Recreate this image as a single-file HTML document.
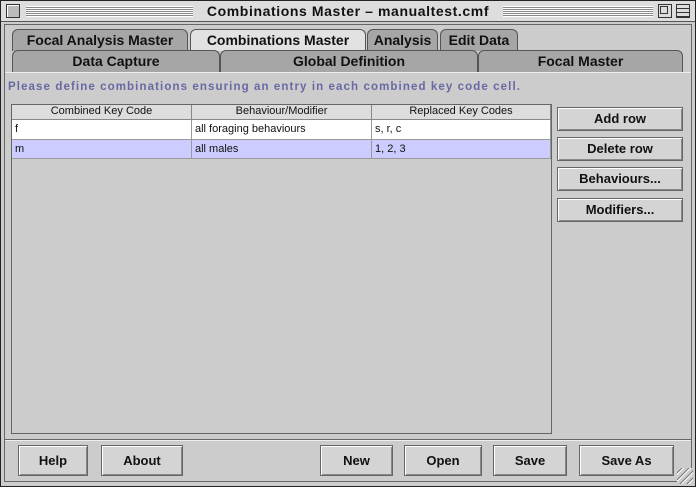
<!DOCTYPE html><html><head><style>
*{box-sizing:border-box;margin:0;padding:0}
body{width:696px;height:487px;background:#ccc;font-family:"Liberation Sans",sans-serif;position:relative;overflow:hidden}
.a{position:absolute}
.win{left:0;top:0;width:696px;height:487px;border:1px solid #222;background:#ccc}
.title{left:1px;top:1px;width:694px;height:21px;background:#ddd;border-bottom:1px solid #555}
.stripes{height:11px;top:6px;background:repeating-linear-gradient(#fff 0 1px,#888 1px 2px)}
.tt{left:0;top:3px;width:696px;text-align:center;font-weight:bold;font-size:14px;color:#111;letter-spacing:0.6px}
.tab{font-weight:bold;font-size:14px;text-align:center;color:#111;border:1px solid #555;border-bottom:none;border-radius:6px 6px 0 0}
.btn{background:#d4d4d4;border:1px solid #666;box-shadow:inset 1px 1px 0 #fff,inset -1px -1px 0 #888;font-weight:bold;font-size:13px;text-align:center;color:#111}
.cell{font-size:11px;color:#111;padding-left:3px;border-right:1px solid #999;border-bottom:1px solid #999;white-space:nowrap}
.hd{background:#ddd;text-align:center;border-right:1px solid #888;border-bottom:1px solid #888;font-size:11px;color:#111}
</style></head><body>
<div class="a win"></div>
<div class="a title"></div>
<div class="a" style="left:6px;top:4px;width:14px;height:14px;border:1px solid #333;background:#bbb;box-shadow:inset 1px 1px 0 #fff"></div>
<div class="a stripes" style="left:26px;width:167px"></div>
<div class="a stripes" style="left:503px;width:150px"></div>
<div class="a tt">Combinations Master – manualtest.cmf</div>
<div class="a" style="left:658px;top:4px;width:14px;height:14px;border:1px solid #333;background:#ddd"><div class="a" style="left:1px;top:1px;width:8px;height:8px;border:1px solid #333"></div></div>
<div class="a" style="left:676px;top:4px;width:14px;height:14px;border:1px solid #333;background:repeating-linear-gradient(#ddd 0 3px,#333 3px 4px)"></div>
<div class="a" style="left:4px;top:24px;width:688px;height:458px;border:1px solid #666"></div>

<div class="a tab" style="left:12px;top:29px;width:176px;height:22px;background:#a6a6a6;line-height:21px">Focal Analysis Master</div>
<div class="a tab" style="left:190px;top:29px;width:176px;height:22px;background:#e2e2e2;line-height:21px">Combinations Master</div>
<div class="a tab" style="left:367px;top:29px;width:71px;height:22px;background:#a6a6a6;line-height:21px">Analysis</div>
<div class="a tab" style="left:440px;top:29px;width:78px;height:22px;background:#a6a6a6;line-height:21px">Edit Data</div>
<div class="a tab" style="left:12px;top:50px;width:208px;height:22px;background:#a6a6a6;line-height:21px">Data Capture</div>
<div class="a tab" style="left:220px;top:50px;width:258px;height:22px;background:#a6a6a6;line-height:21px">Global Definition</div>
<div class="a tab" style="left:478px;top:50px;width:205px;height:22px;background:#a6a6a6;line-height:21px">Focal Master</div>
<div class="a" style="left:5px;top:72px;width:686px;height:1px;background:#eee"></div>

<div class="a" style="left:8px;top:81px;font-size:11.5px;font-weight:bold;color:#6868a4;letter-spacing:1.1px;white-space:nowrap">Please define combinations ensuring an entry in each combined key code cell.</div>

<div class="a" style="left:11px;top:104px;width:541px;height:330px;border:1px solid #666;background:#ccc"></div>
<div class="a hd" style="left:12px;top:105px;width:180px;height:15px">Combined Key Code</div>
<div class="a hd" style="left:192px;top:105px;width:180px;height:15px">Behaviour/Modifier</div>
<div class="a hd" style="left:372px;top:105px;width:179px;height:15px">Replaced Key Codes</div>
<div class="a" style="left:12px;top:120px;width:539px;height:20px;background:#fff"></div>
<div class="a" style="left:12px;top:140px;width:539px;height:19px;background:#ccccff"></div>
<div class="a cell" style="left:12px;top:120px;width:180px;height:20px;line-height:19px">f</div>
<div class="a cell" style="left:192px;top:120px;width:180px;height:20px;line-height:19px">all foraging behaviours</div>
<div class="a cell" style="left:372px;top:120px;width:179px;height:20px;line-height:19px">s, r, c</div>
<div class="a cell" style="left:12px;top:140px;width:180px;height:19px;line-height:18px">m</div>
<div class="a cell" style="left:192px;top:140px;width:180px;height:19px;line-height:18px">all males</div>
<div class="a cell" style="left:372px;top:140px;width:179px;height:19px;line-height:18px">1, 2, 3</div>

<div class="a btn" style="left:557px;top:107px;width:126px;height:24px;line-height:22px">Add row</div>
<div class="a btn" style="left:557px;top:137px;width:126px;height:24px;line-height:22px">Delete row</div>
<div class="a btn" style="left:557px;top:167px;width:126px;height:24px;line-height:22px">Behaviours...</div>
<div class="a btn" style="left:557px;top:198px;width:126px;height:24px;line-height:22px">Modifiers...</div>

<div class="a" style="left:5px;top:439px;width:686px;height:1px;background:#666"></div>
<div class="a" style="left:5px;top:440px;width:686px;height:1px;background:#eee"></div>
<div class="a btn" style="left:18px;top:445px;width:70px;height:31px;line-height:29px">Help</div>
<div class="a btn" style="left:101px;top:445px;width:82px;height:31px;line-height:29px">About</div>
<div class="a btn" style="left:320px;top:445px;width:73px;height:31px;line-height:29px">New</div>
<div class="a btn" style="left:404px;top:445px;width:78px;height:31px;line-height:29px">Open</div>
<div class="a btn" style="left:493px;top:445px;width:74px;height:31px;line-height:29px">Save</div>
<div class="a btn" style="left:579px;top:445px;width:95px;height:31px;line-height:29px">Save As</div>
<div class="a" style="left:677px;top:468px;width:16px;height:16px;background:repeating-linear-gradient(135deg,#ccc 0 3px,#777 3px 4px,#fff 4px 5px)"></div>
</body></html>
